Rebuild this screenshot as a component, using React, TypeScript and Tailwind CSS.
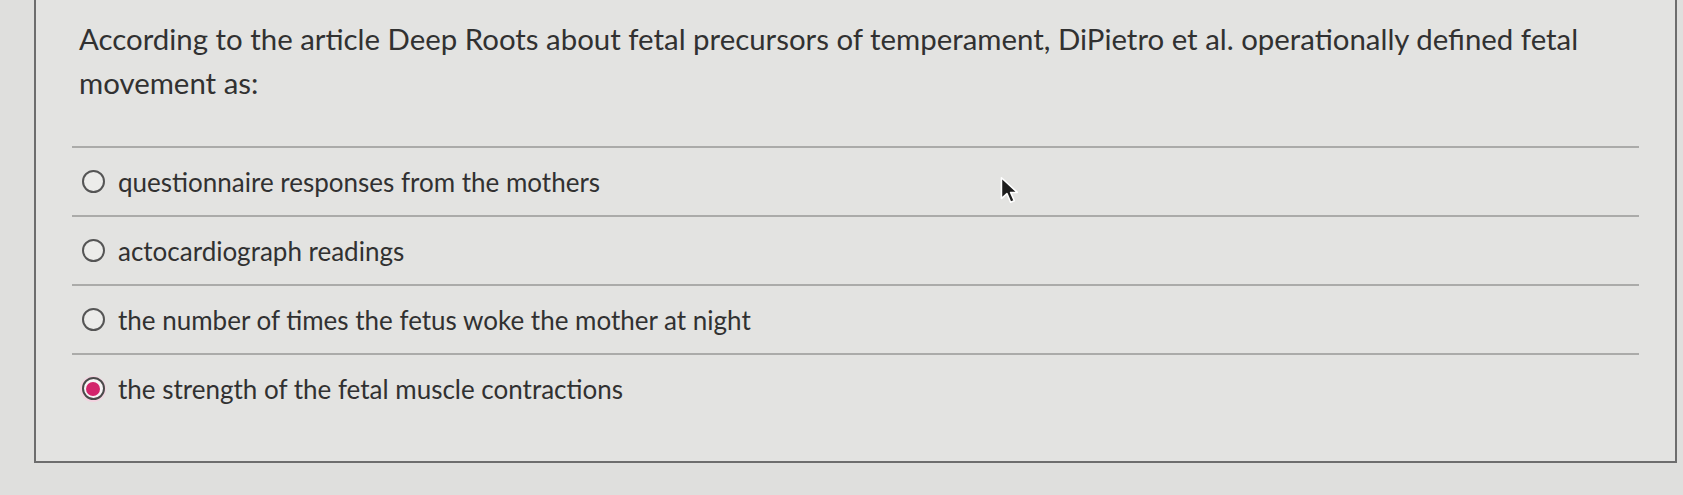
const options = [
  { label: 'questionnaire responses from the mothers', selected: false },
  { label: 'actocardiograph readings', selected: false },
  { label: 'the number of times the fetus woke the mother at night', selected: false },
  { label: 'the strength of the fetal muscle contractions', selected: true },
];

function Radio({ selected }: { selected: boolean }) {
  if (selected) {
    return (
      <span className="flex h-[26px] w-[26px] shrink-0 items-center justify-center rounded-full bg-[#f3d3e0]">
        <span className="flex h-[23px] w-[23px] items-center justify-center rounded-full border-2 border-[#4a4a4a] bg-[#f7f3f5]">
          <span className="h-[14px] w-[14px] rounded-full bg-[#d3246c]"></span>
        </span>
      </span>
    );
  }
  return (
    <span className="flex h-[26px] w-[26px] shrink-0 items-center justify-center">
      <span className="h-[23px] w-[23px] rounded-full border-2 border-[#555555] bg-[#ececea]"></span>
    </span>
  );
}

export default function App() {
  return (
    <div
      className="relative h-[495px] w-[1683px] overflow-hidden bg-[#dfdfdd]"
      style={{ fontFamily: 'Lato, "Open Sans", sans-serif' }}
    >
      <div className="ml-[34px] h-[463px] w-[1643px] border-b-2 border-l-2 border-r-2 border-[#6d6d6d] bg-[#e3e3e1]">
        <div className="pl-[36px] pr-[36px] pt-[17px]">
          {/* Question */}
          <p className="pl-[7px] pr-[30px] text-[29.4px] leading-[44px] text-[#313131]">
            According to the article Deep Roots about fetal precursors of temperament, DiPietro et al. operationally defined fetal movement as:
          </p>

          {/* Answers */}
          <div className="mt-[41px]">
            {options.map((o) => (
              <div
                key={o.label}
                className="flex h-[69px] items-center gap-[12px] border-t-2 border-[#ababa9] pl-[8px]"
              >
                <Radio selected={o.selected} />
                <span className="text-[26px] leading-[32px] text-[#313131]">{o.label}</span>
              </div>
            ))}
          </div>
        </div>
      </div>

      {/* Mouse pointer */}
      <svg
        className="absolute left-[999px] top-[175px]"
        width="22"
        height="30"
        viewBox="0 0 18 24"
      >
        <path
          d="M2 2 L2 19 L6.5 15 L9.5 22 L12.5 20.8 L9.5 14 L15 14 Z"
          fill="#1e1e1e"
          stroke="#ffffff"
          strokeWidth="1.3"
          strokeLinejoin="round"
        />
      </svg>
    </div>
  );
}
